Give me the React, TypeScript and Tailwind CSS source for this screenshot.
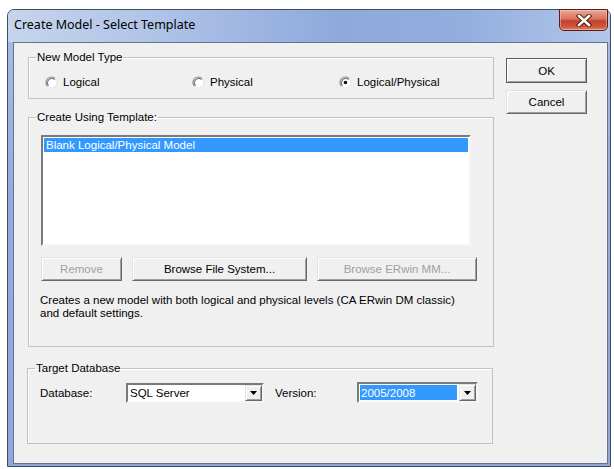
import React, { useState } from 'react';

type ModelType = 'logical' | 'physical' | 'both';

// classic 3D radio glyph: dark arc on the upper-left, light arc lower-right
function RadioDot({ checked }: { checked: boolean }) {
  return (
    <svg width="13" height="13" viewBox="0 0 13 13" className="shrink-0">
      <circle cx="6.5" cy="6.5" r="5.5" fill="#ffffff" />
      <path d="M10.4 2.6 A5.5 5.5 0 0 0 2.6 10.4" fill="none" stroke="#8c8c8c" strokeWidth="1.2" />
      <path d="M9.6 3.4 A4.4 4.4 0 0 0 3.4 9.6" fill="none" stroke="#505050" strokeWidth="1" />
      <path d="M2.6 10.4 A5.5 5.5 0 0 0 10.4 2.6" fill="none" stroke="#e8e8e8" strokeWidth="1.2" />
      {checked && <circle cx="6.5" cy="6.5" r="1.8" fill="#111111" />}
    </svg>
  );
}

function Radio({
  label,
  checked,
  onClick,
  width,
}: {
  label: string;
  checked: boolean;
  onClick: () => void;
  width: string;
}) {
  return (
    <button type="button" onClick={onClick} className={`flex items-center gap-[5px] ${width}`}>
      <RadioDot checked={checked} />
      <span>{label}</span>
    </button>
  );
}

function PushButton({
  children,
  disabled,
  isDefault,
  className,
}: {
  children: React.ReactNode;
  disabled?: boolean;
  isDefault?: boolean;
  className: string;
}) {
  return (
    <button
      type="button"
      disabled={disabled}
      className={`flex items-center justify-center bg-[#f0f0f0] border ${
        isDefault
          ? 'border-[#5a5a5a] shadow-[inset_1px_1px_0_#ffffff,inset_-1px_-1px_0_#a0a0a0]'
          : 'border-t-[#e3e3e3] border-l-[#e3e3e3] border-b-[#696969] border-r-[#696969] shadow-[inset_1px_1px_0_#ffffff,inset_-1px_-1px_0_#a0a0a0]'
      } ${disabled ? 'text-[#a0a0a0]' : 'text-black'} ${className}`}
    >
      {children}
    </button>
  );
}

function ComboBox({
  value,
  selected,
  className,
}: {
  value: string;
  selected?: boolean;
  className: string;
}) {
  return (
    <div
      className={`flex items-stretch bg-white border-2 border-t-[#7a7a7a] border-l-[#7a7a7a] border-b-[#f4f4f4] border-r-[#f4f4f4] ${className}`}
    >
      <div className="flex-1 flex items-center pl-px pr-[2px] py-[1px]">
        <span
          className={`flex items-center h-full w-full pl-[1px] ${
            selected ? 'bg-[#3399ff] text-white' : 'text-black'
          }`}
        >
          {value}
        </span>
      </div>
      <div className="w-[17px] flex items-center justify-center bg-[#f0f0f0] border border-t-[#e3e3e3] border-l-[#e3e3e3] border-b-[#696969] border-r-[#696969] shadow-[inset_1px_1px_0_#ffffff,inset_-1px_-1px_0_#a0a0a0]">
        <svg width="7" height="4" viewBox="0 0 7 4">
          <path d="M0 0 H7 L3.5 4 Z" fill="#000000" />
        </svg>
      </div>
    </div>
  );
}

export default function App() {
  const [modelType, setModelType] = useState<ModelType>('both');

  return (
    <div
      className="w-[614px] h-[469px] bg-white overflow-hidden pt-[9px] pl-[7px] text-[11.5px] leading-[14px] text-black"
      style={{ fontFamily: '"Liberation Sans", Arial, sans-serif' }}
    >
      {/* window frame */}
      <div className="w-[604px] h-[458px] rounded-t-[7px] border border-[#3f4d61] bg-[linear-gradient(180deg,#a9bee6_0%,#93acdf_40%,#8fa8dc_100%)] flex flex-col">
        {/* title bar */}
        <div className="h-[32px] shrink-0 flex items-start justify-between rounded-t-[6px] bg-[linear-gradient(90deg,#c6d5ec_0%,#afc3e7_25%,#8fa9dd_55%,#93addf_75%,#b2c6e9_100%)]">
          <div
            className="pl-[6px] pt-[7px] text-[12.5px] leading-[16px] text-black"
            style={{ fontFamily: '"Noto Sans", "Open Sans", sans-serif' }}
          >
            Create Model - Select Template
          </div>
          <button
            type="button"
            className="mr-[2px] -mt-px w-[49px] h-[22px] rounded-b-[5px] border border-[#5c1d14] bg-[linear-gradient(180deg,#e9a89a_0%,#d7725e_45%,#c4402a_55%,#cf5a40_85%,#e0866c_100%)] shadow-[inset_0_0_0_1px_rgba(255,210,200,0.45)] flex items-center justify-center"
          >
            <svg width="16" height="13" viewBox="0 0 16 13">
              <path d="M3 2 L13 11 M13 2 L3 11" stroke="#4a1a12" strokeWidth="4.4" strokeLinecap="square" />
              <path d="M3 2 L13 11 M13 2 L3 11" stroke="#ffffff" strokeWidth="2.6" strokeLinecap="square" />
            </svg>
          </button>
        </div>

        {/* client area */}
        <div className="ml-[5px] mr-[2px] h-[422px] bg-[#f0f0f0] border border-[#65748b] flex">
          <div className="pl-[14px] flex flex-col">
            <fieldset className="mt-[7px] w-[466px] h-[49px] border border-[#c2c2c2] shadow-[inset_1px_1px_0_#ffffff] px-0">
              <legend className="ml-[7px] px-[1px] leading-[14px]">New Model Type</legend>
              <div className="mt-[11px] pl-[16px] h-[14px] flex items-center">
                <Radio
                  label="Logical"
                  checked={modelType === 'logical'}
                  onClick={() => setModelType('logical')}
                  width="w-[147px]"
                />
                <Radio
                  label="Physical"
                  checked={modelType === 'physical'}
                  onClick={() => setModelType('physical')}
                  width="w-[147px]"
                />
                <Radio
                  label="Logical/Physical"
                  checked={modelType === 'both'}
                  onClick={() => setModelType('both')}
                  width="w-[120px]"
                />
              </div>
            </fieldset>

            <fieldset className="mt-[11px] w-[466px] h-[237px] border border-[#c2c2c2] shadow-[inset_1px_1px_0_#ffffff] px-0">
              <legend className="ml-[7px] px-[1px] leading-[14px]">Create Using Template:</legend>
              <div className="mt-[11px] ml-[12px] w-[430px] h-[111px] bg-white border-2 border-t-[#7a7a7a] border-l-[#7a7a7a] border-b-[#f4f4f4] border-r-[#f4f4f4] pt-px px-px">
                <div className="h-[14px] bg-[#3399ff] text-white pl-[2px] flex items-center">
                  Blank Logical/Physical Model
                </div>
              </div>
              <div className="mt-[11px] ml-[12px] flex gap-[10px]">
                <PushButton disabled className="w-[81px] h-[24px]">
                  Remove
                </PushButton>
                <PushButton className="w-[175px] h-[24px]">Browse File System...</PushButton>
                <PushButton disabled className="w-[160px] h-[24px]">
                  Browse ERwin MM...
                </PushButton>
              </div>
              <p className="mt-[13px] ml-[11px] leading-[12.5px]">
                Creates a new model with both logical and physical levels (CA ERwin DM classic)
                <br />
                and default settings.
              </p>
            </fieldset>

            <fieldset className="mt-[14px] -ml-px w-[466px] h-[83px] border border-[#c2c2c2] shadow-[inset_1px_1px_0_#ffffff] px-0">
              <legend className="ml-[7px] px-[1px] leading-[14px]">Target Database</legend>
              <div className="mt-[7px] pl-[12px] flex items-center">
                <span className="w-[86px]">Database:</span>
                <ComboBox value="SQL Server" className="w-[138px] h-[20px]" />
                <span className="ml-[11px] w-[82px]">Version:</span>
                <ComboBox value="2005/2008" selected className="w-[121px] h-[21px]" />
              </div>
            </fieldset>
          </div>

          {/* dialog buttons */}
          <div className="ml-[12px] pt-[15px] flex flex-col gap-[7px]">
            <PushButton isDefault className="w-[81px] h-[25px]">
              OK
            </PushButton>
            <PushButton className="w-[81px] h-[24px]">Cancel</PushButton>
          </div>
        </div>
      </div>
    </div>
  );
}
